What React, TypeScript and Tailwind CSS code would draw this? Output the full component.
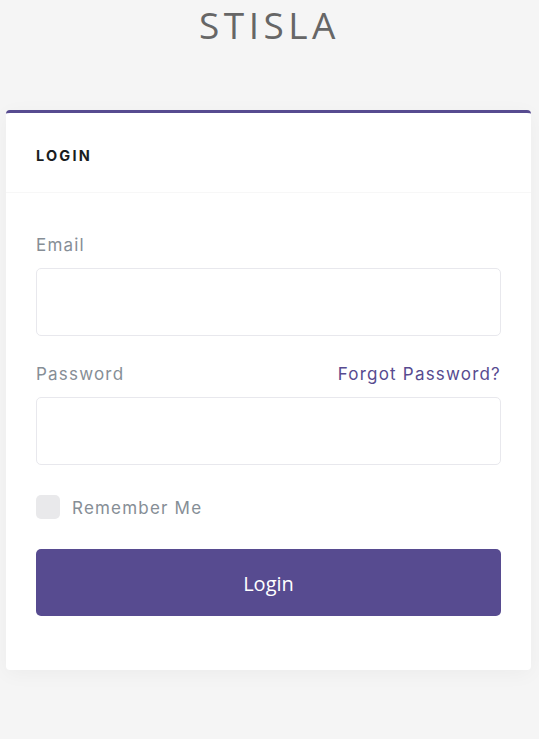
import React from "react";

export default function App() {
  const mont = { fontFamily: "Inter, 'Open Sans', sans-serif" };
  return (
    <div className="min-h-[739px] w-full bg-[#f5f5f5] px-[6px]" style={{ fontFamily: "'Open Sans', sans-serif" }}>
      <div className="flex h-[52px] items-start justify-center">
        <div className="mt-[2px] text-[37px] leading-[46px] tracking-[4.5px] text-[#666666]">STISLA</div>
      </div>
      <div className="mt-[58px] w-[525px] rounded-[4px] border-t-[3px] border-[#574b90] bg-white shadow-[0_4px_20px_rgba(0,0,0,0.04)]">
        <div className="flex h-[80px] items-center border-b border-[#f7f7f7] px-[30px] pt-[7px]">
          <h4 className="text-[14.5px] font-bold tracking-[2.2px] text-[#191d21]" style={mont}>LOGIN</h4>
        </div>
        <div className="px-[30px] pb-[54px] pt-[40px]" style={mont}>
          <div className="flex h-[24px] items-center pt-[2px] text-[17px] tracking-[1.2px] text-[#868e96]">Email</div>
          <div className="mt-[11px] h-[68px] rounded-[5px] border border-[#e8e8ed] bg-white" />
          <div className="mt-[26px] flex h-[24px] items-center justify-between pt-[2px] text-[17px] tracking-[1.2px]">
            <span className="text-[#868e96]">Password</span>
            <span className="text-[#574b90]">Forgot Password?</span>
          </div>
          <div className="mt-[11px] h-[68px] rounded-[5px] border border-[#e8e8ed] bg-white" />
          <div className="mt-[30px] flex h-[24px] items-center gap-[12px]">
            <div className="h-[24px] w-[24px] rounded-[5px] bg-[#e9e9eb]" />
            <span className="pt-[2px] text-[17px] leading-[24px] tracking-[1.2px] text-[#868e96]">Remember Me</span>
          </div>
          <button className="mt-[30px] flex h-[67px] w-full items-center justify-center rounded-[5px] bg-[#574b90] pt-[2px] text-[20px] text-white" style={{ fontFamily: "'Open Sans', sans-serif" }}>
            Login
          </button>
        </div>
      </div>
    </div>
  );
}
